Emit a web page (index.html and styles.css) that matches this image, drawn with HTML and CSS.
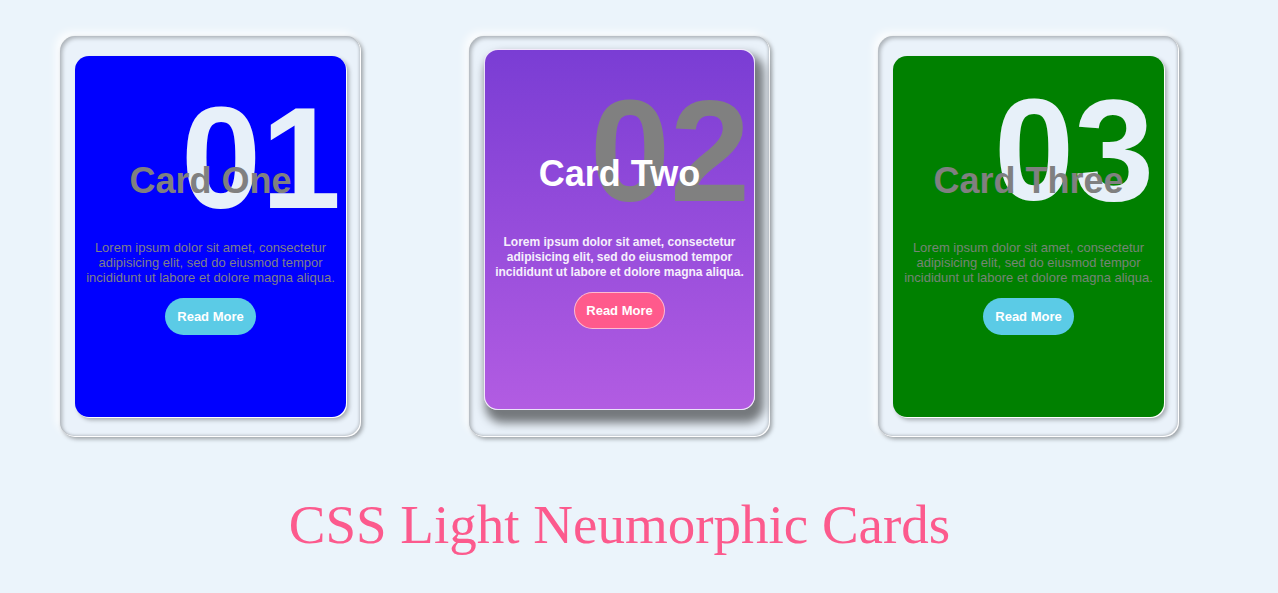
FILE: index.html
```html
<!DOCTYPE html>
<html lang="en">
<head>
<meta charset="utf-8">
<title>CSS Light Neumorphic Cards</title>
<link rel="stylesheet" href="styles.css">
</head>
<body>
<div class="page">
  <div class="cards">
    <div class="card card-one">
      <div class="box">
        <span class="num">01</span>
        <h3 class="title">Card One</h3>
        <p class="text">Lorem ipsum dolor sit amet, consectetur adipisicing elit, sed do eiusmod tempor incididunt ut labore et dolore magna aliqua.</p>
        <a class="btn" href="#">Read More</a>
      </div>
    </div>
    <div class="card card-two">
      <div class="box">
        <span class="num">02</span>
        <h3 class="title">Card Two</h3>
        <p class="text">Lorem ipsum dolor sit amet, consectetur adipisicing elit, sed do eiusmod tempor incididunt ut labore et dolore magna aliqua.</p>
        <a class="btn" href="#">Read More</a>
      </div>
    </div>
    <div class="card card-three">
      <div class="box">
        <span class="num">03</span>
        <h3 class="title">Card Three</h3>
        <p class="text">Lorem ipsum dolor sit amet, consectetur adipisicing elit, sed do eiusmod tempor incididunt ut labore et dolore magna aliqua.</p>
        <a class="btn" href="#">Read More</a>
      </div>
    </div>
  </div>
  <h1 class="heading">CSS Light Neumorphic Cards</h1>
</div>
</body>
</html>
```

FILE: styles.css
```css
* { box-sizing: border-box; }

html, body {
  margin: 0;
  padding: 0;
  background: #ebf4fb;
  font-family: "Liberation Sans", Arial, sans-serif;
}

.page {
  width: 1119px;
  margin-left: 60px;
  padding-top: 36px;
}

.cards {
  display: flex;
  gap: 108px;
}

.card {
  width: 301px;
  height: 401px;
  border-radius: 15px;
  padding: 20px 15px 20px 15px;
  background: #eaf2fa;
  box-shadow:
    inset -1px -1px 0 #ffffff,
    inset -2px -2px 3px rgba(0, 0, 0, 0.18),
    inset 2px 2px 4px rgba(0, 0, 0, 0.28),
    2px 2px 4px rgba(0, 0, 0, 0.35),
    -4px -4px 8px rgba(255, 255, 255, 0.9);
}

.box {
  position: relative;
  width: 271px;
  height: 361px;
  border-radius: 14px;
  display: flex;
  flex-direction: column;
  align-items: center;
  padding-top: 107px;
  box-shadow: 1px 1px 0 #ffffff, 3px 3px 4px rgba(0, 0, 0, 0.3);
}

.num {
  position: absolute;
  top: 31px;
  left: 106px;
  font-size: 144px;
  line-height: 144px;
  font-weight: bold;
  color: #e7f0f9;
  white-space: nowrap;
}

.title {
  position: relative;
  z-index: 1;
  margin: 0;
  font-size: 36px;
  line-height: 36px;
  font-weight: bold;
  color: #808080;
  white-space: nowrap;
}

.text {
  position: relative;
  z-index: 1;
  margin: 41px 6px 0;
  font-size: 13px;
  line-height: 15px;
  text-align: center;
  color: #7f7f8a;
}

.btn {
  position: relative;
  z-index: 1;
  margin-top: 13px;
  padding: 11px 12px;
  font-size: 13px;
  line-height: 15px;
  font-weight: bold;
  color: #ffffff;
  text-decoration: none;
  background: #5bcbe6;
  border-radius: 19px;
}

.card-one .box { background: #0000ff; }

.card-three .box { background: #008000; }
.card-three .num { top: 23px; left: 101px; }
.card-three .text { color: #758575; }

.card-two .box {
  transform: translateY(-7px);
  background: linear-gradient(180deg, #7a3dd4 0%, #b25ce2 100%);
  border: 1px solid rgba(255, 255, 255, 0.85);
  padding-top: 106px;
  box-shadow: 5px 9px 10px 4px rgba(0, 0, 0, 0.5);
}
.card-two .num { top: 30px; left: 105px; color: #808080; }
.card-two .title { color: #ffffff; }
.card-two .text {
  margin-top: 43px;
  font-size: 12px;
  font-weight: bold;
  color: #f6effc;
}
.card-two .btn {
  margin-top: 12px;
  background: #ff5a8c;
  border: 1px solid rgba(255, 210, 225, 0.8);
  padding: 10px 11px;
}

.heading {
  margin: 56px 0 0;
  text-align: center;
  font-family: "Liberation Serif", "Times New Roman", serif;
  font-weight: normal;
  font-size: 55px;
  color: #fc5a8d;
}
```
